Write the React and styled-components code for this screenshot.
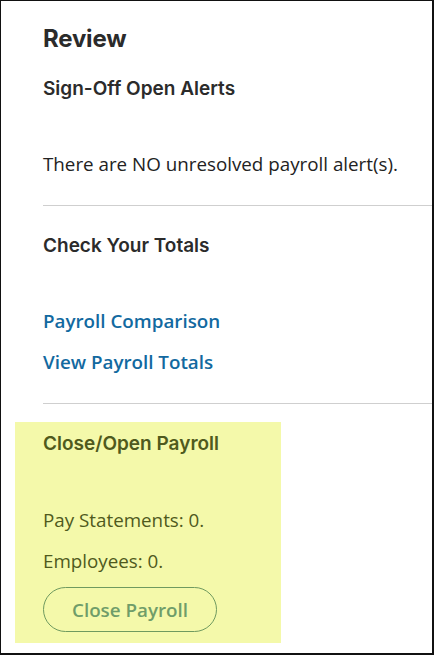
import React from "react";
import styled, { createGlobalStyle } from "styled-components";

const GlobalStyle = createGlobalStyle`
  html, body {
    margin: 0;
    padding: 0;
    background: #fff;
  }
`;

const Frame = styled.div`
  box-sizing: border-box;
  width: 434px;
  height: 655px;
  border: 1px solid #111;
  border-right-width: 2px;
  border-bottom-width: 2px;
  padding: 22px 0 0 42px;
  overflow: hidden;
  font-family: "Open Sans", "Noto Sans", sans-serif;
  color: #222;
`;

const Title = styled.h1`
  margin: 0;
  font-family: Inter, "Liberation Sans", sans-serif;
  font-weight: 700;
  font-size: 24px;
  line-height: 32px;
  color: #2b2b2b;
  letter-spacing: -0.2px;
`;

const Section = styled.section`
  padding: ${(p) => p.$pad || "0"};
  border-bottom: ${(p) => (p.$divider ? "1px solid #cfcfcf" : "none")};
`;

const Heading = styled.h2`
  margin: 0;
  font-family: Inter, "Liberation Sans", sans-serif;
  font-weight: 600;
  font-size: 19px;
  line-height: 26px;
  color: ${(p) => p.$color || "#2b2b2b"};
`;

const Text = styled.p`
  margin: ${(p) => p.$margin || "0"};
  font-size: 18.8px;
  line-height: 26px;
  color: ${(p) => p.$color || "#222"};
`;

const LinkList = styled.div`
  display: flex;
  flex-direction: column;
  gap: 15px;
  margin-top: 49px;
`;

const NavLink = styled.a`
  font-size: 18.8px;
  line-height: 26px;
  font-weight: 600;
  color: #1269a0;
  text-decoration: none;
  cursor: pointer;
`;

const Highlight = styled.div`
  width: 266px;
  margin: 18px 0 0 -28px;
  padding: 9px 0 11px 28px;
  box-sizing: border-box;
  background: #f4f9aa;
`;

const Button = styled.button`
  display: block;
  margin-top: 13px;
  width: 174px;
  height: 45px;
  padding: 0;
  border: 1px solid #6f9a5f;
  border-radius: 23px;
  background: transparent;
  font-family: "Open Sans", "Noto Sans", sans-serif;
  font-size: 18.8px;
  font-weight: 600;
  color: #6f9d69;
  cursor: pointer;
`;

export default function App() {
  return (
    <>
      <GlobalStyle />
      <Frame>
        <Title>Review</Title>
        <Section $divider $pad="21px 0 28px 0">
          <Heading>Sign-Off Open Alerts</Heading>
          <Text $margin="49px 0 0 0">There are NO unresolved payroll alert(s).</Text>
        </Section>
        <Section $divider $pad="27px 0 28px 0">
          <Heading>Check Your Totals</Heading>
          <LinkList>
            <NavLink href="#comparison">Payroll Comparison</NavLink>
            <NavLink href="#totals">View Payroll Totals</NavLink>
          </LinkList>
        </Section>
        <Highlight>
          <Heading $color="#4f5a1d">Close/Open Payroll</Heading>
          <Text $margin="50px 0 0 0" $color="#4f5a1d">Pay Statements: 0.</Text>
          <Text $margin="15px 0 0 0" $color="#4f5a1d">Employees: 0.</Text>
          <Button>Close Payroll</Button>
        </Highlight>
      </Frame>
    </>
  );
}
